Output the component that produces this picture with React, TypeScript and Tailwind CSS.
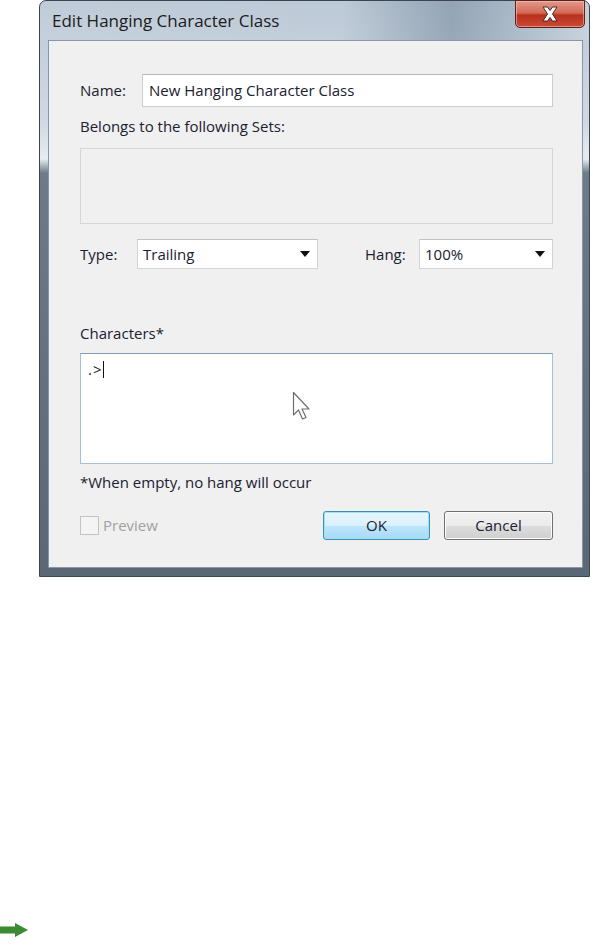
/**
 * Edit Hanging Character Class — Windows 7 style dialog.
 */

const ui = '"Segoe UI", "Open Sans", "Noto Sans", sans-serif';

export default function App() {
  return (
    <div className="relative h-[952px] w-[593px] bg-white" style={{ fontFamily: ui }}>
      <Dialog />

      {/* Green arrow, bottom-left */}
      <div className="absolute left-0 top-[922px]">
        <svg width="30" height="16" viewBox="0 0 30 16">
          <path d="M0 4.5 H15 V1 L28 8 L15 15 V11.5 H0 Z" fill="#3b8b33" />
        </svg>
      </div>
    </div>
  );
}

function Dialog() {
  return (
    <div
      className="ml-[39px] flex h-[577px] w-[551px] flex-col rounded-t-[7px] border border-[#3c4652] bg-[linear-gradient(to_bottom,#bcc9d6_0px,#cfd9e3_120px,#e6ecf1_158px,#6d7b89_172px,#5a6774_577px)]"
    >
      {/* Title bar */}
      <div className="relative flex h-[39px] shrink-0 items-start rounded-t-[7px] bg-[linear-gradient(to_right,rgba(255,255,255,0.05)_0%,rgba(255,255,255,0)_55%,rgba(70,95,120,0.35)_75%,rgba(255,255,255,0.1)_100%)]">
        <span className="ml-[12px] mt-[9px] text-[17px] leading-[22px] text-[#1b1b1b]">
          Edit Hanging Character Class
        </span>
        <CloseButton />
      </div>

      {/* Side frames + client */}
      <div className="flex flex-1">
        <div className="w-[8px] shrink-0" />
        <div className="flex flex-1 flex-col border border-[#8797a7] bg-[#f0f0f0] pl-[31px] pr-[29px] text-[15px] text-[#1a2130]">
          {/* Name */}
          <div className="mt-[33px] flex h-[33px] items-center">
            <span className="w-[62px]">Name:</span>
            <div className="flex h-full flex-1 items-center border border-[#c9ccd1] border-t-[#b5b9bf] bg-white px-[6px]">
              New Hanging Character Class
            </div>
          </div>

          {/* Sets */}
          <div className="flex h-[41px] items-center pb-[2px]">Belongs to the following Sets:</div>
          <div className="h-[76px] border border-[#d4d6d9] bg-[#f0f0f0]" />

          {/* Type / Hang */}
          <div className="mt-[15px] flex h-[30px] items-center">
            <span className="w-[57px]">Type:</span>
            <Select value="Trailing" width="w-[181px]" />
            <span className="ml-[47px] w-[54px]">Hang:</span>
            <Select value="100%" width="flex-1" />
          </div>

          {/* Characters */}
          <div className="flex h-[84px] items-end pb-[9px]">Characters*</div>
          <div className="relative h-[111px] border border-[#a9bfd6] border-t-[#7f9db9] bg-white px-[7px] pt-[4px]">
            <span className="tracking-[1px]">.&gt;</span>
            <span className="inline-block h-[17px] w-px translate-y-[3px] bg-[#111]" />
            <div className="absolute left-[211px] top-[37px]">
              <svg width="20" height="32" viewBox="0 0 20 32">
                <path
                  d="M1.5 1.5 L1.5 24 L6.5 19 L10.5 28 L14 26.5 L10 18 L17 18 Z"
                  fill="#ffffff"
                  stroke="#6f6f6f"
                  strokeWidth="1.2"
                  strokeLinejoin="round"
                />
              </svg>
            </div>
          </div>

          <div className="flex h-[36px] items-center">*When empty, no hang will occur</div>

          {/* Bottom row */}
          <div className="mt-[11px] flex h-[29px] items-center">
            <div className="h-[19px] w-[19px] border border-[#c3c3c3] bg-[#f4f4f4]" />
            <span className="ml-[4px] text-[#a0a0a0]">Preview</span>
            <div className="flex-1" />
            <button className="flex h-[29px] w-[107px] items-center justify-center rounded-[3px] border border-[#3c8fb5] bg-[linear-gradient(to_bottom,#eaf6fd_0%,#d9f0fc_50%,#bee6fd_51%,#a7d9f5_100%)] shadow-[inset_0_0_0_1px_#9fe3f7]">
              OK
            </button>
            <button className="ml-[14px] flex h-[29px] w-[109px] items-center justify-center rounded-[3px] border border-[#707070] bg-[linear-gradient(to_bottom,#f2f2f2_0%,#ebebeb_50%,#dddddd_51%,#cfcfcf_100%)] shadow-[inset_0_0_0_1px_#fcfcfc]">
              Cancel
            </button>
          </div>
        </div>
        <div className="w-[6px] shrink-0" />
      </div>
      <div className="h-[8px] shrink-0" />
    </div>
  );
}

function Select({ value, width }: { value: string; width: string }) {
  return (
    <div className={`${width} flex h-[30px] items-center justify-between border border-[#d0d3d7] border-t-[#bfc3c8] bg-white pl-[5px] pr-[7px]`}>
      <span>{value}</span>
      <svg width="10" height="6" viewBox="0 0 10 6">
        <path d="M0 0 H10 L5 6 Z" fill="#111" />
      </svg>
    </div>
  );
}

function CloseButton() {
  return (
    <div className="absolute right-[4px] top-[-1px] flex h-[28px] w-[70px] items-center justify-center rounded-b-[5px] border border-[#5a2320] bg-[linear-gradient(to_bottom,#e29a8a_0%,#d46a58_45%,#b9301d_55%,#c94a35_100%)] shadow-[inset_0_0_0_1px_rgba(255,210,200,0.5)]">
      <svg width="18" height="16" viewBox="0 0 18 16">
        <path
          d="M2 1 H6.5 L9 4.5 L11.5 1 H16 L11.5 8 L16 15 H11.5 L9 11.5 L6.5 15 H2 L6.5 8 Z"
          fill="#ffffff"
          stroke="#4a2a28"
          strokeWidth="1"
          strokeLinejoin="round"
        />
      </svg>
    </div>
  );
}
